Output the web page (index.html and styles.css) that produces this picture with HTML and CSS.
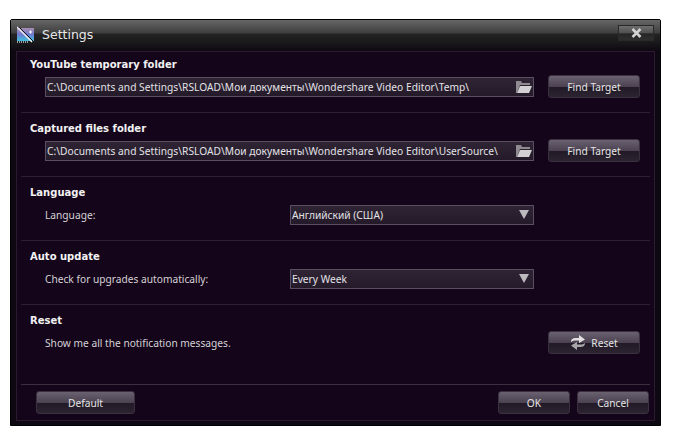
FILE: index.html
```html
<!DOCTYPE html>
<html lang="en">
<head>
  <meta charset="UTF-8">
  <title>Settings</title>
  <link rel="stylesheet" href="styles.css">
</head>
<body>
  <div class="window">
    <div class="titlebar">
      <svg class="app-icon" width="18" height="18" viewBox="0 0 18 18">
        <defs>
          <linearGradient id="film" x1="0" y1="0" x2="0" y2="1">
            <stop offset="0" stop-color="#a88cb0"/>
            <stop offset="0.5" stop-color="#6f7ad0"/>
            <stop offset="1" stop-color="#3cc0dc"/>
          </linearGradient>
        </defs>
        <rect x="0" y="2" width="17" height="13" fill="url(#film)"/>
        <path d="M0 16h11" stroke="#c8ccd4" stroke-width="1.500" stroke-dasharray="1 1"/>
        <path d="M0 1l15 15" stroke="#ecebf0" stroke-width="1.500"/>
        <path d="M2 1l14 14" stroke="#111118"/>
        <path d="M12 6h3M13.500 4.500v3" stroke="#fff"/>
      </svg>
      <span class="title">Settings</span>
      <div class="close-btn">
        <svg width="11" height="10" viewBox="0 0 11 10"><path d="M1.500 1l8 8M9.500 1l-8 8" stroke="#d4d4d4" stroke-width="2.500"/></svg>
      </div>
    </div>

    <div class="panel">
      <div class="section">
        <h2>YouTube temporary folder</h2>
        <div class="row">
          <div class="field path-field">
            <span class="field-text">C:\Documents and Settings\RSLOAD\Мои документы\Wondershare Video Editor\Temp\</span>
            <svg class="folder" width="18" height="14" viewBox="0 0 18 14"><path d="M1 1h5l1 2h8v2H5L2 13H1z" fill="#8e8a90"/><path d="M5 6h12l-3 7H2z" fill="#d2d0d2"/></svg>
          </div>
          <div class="btn find-btn">Find Target</div>
        </div>
      </div>

      <div class="section">
        <h2>Captured files folder</h2>
        <div class="row">
          <div class="field path-field">
            <span class="field-text">C:\Documents and Settings\RSLOAD\Мои документы\Wondershare Video Editor\UserSource\</span>
            <svg class="folder" width="18" height="14" viewBox="0 0 18 14"><path d="M1 1h5l1 2h8v2H5L2 13H1z" fill="#8e8a90"/><path d="M5 6h12l-3 7H2z" fill="#d2d0d2"/></svg>
          </div>
          <div class="btn find-btn">Find Target</div>
        </div>
      </div>

      <div class="section">
        <h2>Language</h2>
        <div class="row">
          <span class="label">Language:</span>
          <div class="field select-field">
            <span class="field-text">Английский (США)</span>
            <span class="arrow"></span>
          </div>
        </div>
      </div>

      <div class="section">
        <h2>Auto update</h2>
        <div class="row">
          <span class="label">Check for upgrades automatically:</span>
          <div class="field select-field">
            <span class="field-text">Every Week</span>
            <span class="arrow"></span>
          </div>
        </div>
      </div>

      <div class="section section-reset">
        <h2>Reset</h2>
        <div class="row row-between">
          <span class="label">Show me all the notification messages.</span>
          <div class="btn find-btn reset-btn">
            <svg width="16" height="15" viewBox="0 0 16 15">
              <path d="M1 7C1 4 3 3 6 3h3V0l6 4.500-6 3.500V5.500H6C4 5.500 2.500 5.500 1 7z" fill="#e2e0e2"/>
              <path d="M15 8c0 3-2 4-5 4H7v3L1 10.500 7 7v2.500h3c2 0 3.500 0 5-1.500z" fill="#a8a6a8"/>
            </svg>
            <span>Reset</span>
          </div>
        </div>
      </div>

      <div class="footer">
        <div class="btn default-btn">Default</div>
        <div class="footer-right">
          <div class="btn small-btn">OK</div>
          <div class="btn small-btn">Cancel</div>
        </div>
      </div>
    </div>
  </div>
</body>
</html>
```

FILE: styles.css
```css
body {
  margin: 0;
  padding: 19px 0 0 10px;
  background: white;
  font-family: "Noto Sans", sans-serif;
  font-size: 10.200px;
  color: #d4d2d6;
}
.window {
  width: 651px;
  height: 407px;
  box-sizing: border-box;
  background: #0e0812;
  border: 1px solid #000;
  border-radius: 2px 2px 0 0;
  display: flex;
  flex-direction: column;
}
.titlebar {
  height: 31px;
  flex: none;
  display: flex;
  align-items: center;
  padding: 0 6px 2px 6px;
  box-sizing: border-box;
  background: linear-gradient(#666 0, #3e3e3e 13px, #242424 14px, #1a1a1c 22px, #0e0812 31px);
}
.app-icon {
  flex: none;
}
.title {
  margin-left: 7px;
  color: #e8e8e8;
  font-family: "DejaVu Sans", sans-serif;
  font-size: 12.500px;
}
.close-btn {
  margin-left: auto;
  margin-bottom: 4px;
  width: 36px;
  height: 16px;
  box-sizing: border-box;
  display: flex;
  align-items: center;
  justify-content: center;
  border: 1px solid #2a2a2a;
  background: linear-gradient(#6e6e6e, #505050 50%, #262626 55%, #2e2e2e);
}
.panel {
  flex: 1;
  margin: 0 5px 4px;
  border: 1px solid #2a1c2e;
  background: #15051a;
  display: flex;
  flex-direction: column;
}
.section {
  margin: 0 4px;
  padding: 8px 0 14px 9px;
  border-bottom: 1px solid #2c2030;
}
.section:first-child {
  padding-top: 5px;
}
.section-reset {
  padding-bottom: 30px;
  border-bottom-color: #3c3040;
}
h2 {
  margin: 0 0 2px;
  font-family: "DejaVu Sans", sans-serif;
  font-size: 10px;
  line-height: 16px;
  font-weight: bold;
  color: #f2f2f2;
}
.row {
  height: 23px;
  display: flex;
  align-items: center;
  padding-left: 15px;
  padding-right: 10px;
}
.row-between {
  justify-content: space-between;
}
.label {
  width: 245px;
  flex: none;
  white-space: nowrap;
}
.row-between .label {
  width: auto;
}
.field {
  height: 20px;
  box-sizing: border-box;
  display: flex;
  align-items: center;
  border: 1px solid #5a4e62;
  background: linear-gradient(#2e2434, #241a2a);
  color: #e4e2e6;
  white-space: nowrap;
}
.field-text {
  padding-left: 1px;
}
.path-field {
  width: 489px;
  letter-spacing: 0.04px;
}
.select-field {
  width: 244px;
}
.folder {
  margin-left: auto;
  flex: none;
}
.arrow {
  margin-left: auto;
  margin-right: 4px;
  width: 0;
  height: 0;
  border-left: 5px solid transparent;
  border-right: 5px solid transparent;
  border-top: 9px solid #bcbabf;
}
.btn {
  height: 23px;
  box-sizing: border-box;
  display: flex;
  align-items: center;
  justify-content: center;
  gap: 5px;
  border: 1px solid #3a3040;
  border-radius: 3px;
  background: linear-gradient(#6a6270, #4c4252 50%, #211a26 52%, #2c2430);
  color: #e4e4e4;
}
.find-btn {
  width: 92px;
  margin-left: auto;
}
.footer {
  margin: 0 4px;
  flex: 1;
  display: flex;
  align-items: flex-start;
  padding: 6px 1px 0 15px;
}
.default-btn {
  width: 99px;
}
.footer-right {
  margin-left: auto;
  display: flex;
  gap: 7px;
}
.small-btn {
  width: 72px;
}
```
